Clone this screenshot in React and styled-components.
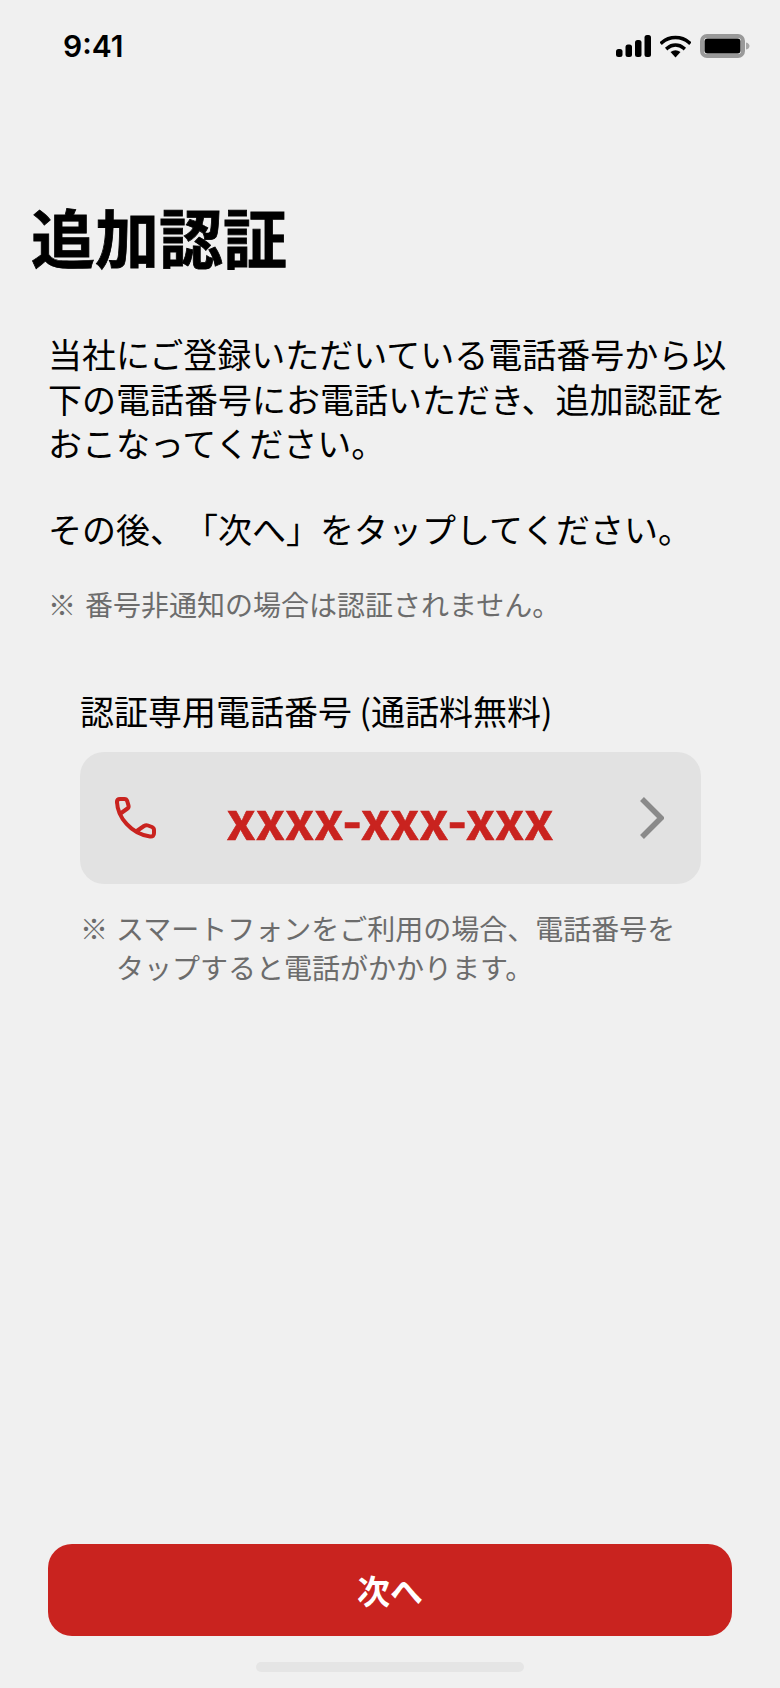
import React from 'react';
import styled, { createGlobalStyle } from 'styled-components';

const GlobalStyle = createGlobalStyle`
  html, body {
    margin: 0;
    padding: 0;
    background: #f0f0f0;
  }
  * {
    box-sizing: border-box;
  }
`;

const Screen = styled.div`
  width: 780px;
  height: 1688px;
  display: flex;
  flex-direction: column;
  background: #f0f0f0;
  color: #000;
  font-family: 'Noto Sans CJK JP', 'Noto Sans', sans-serif;
  text-spacing-trim: space-all;
  overflow: hidden;
`;

const StatusBar = styled.div`
  height: 92px;
  padding: 28px 30px 0 63px;
  display: flex;
  justify-content: space-between;
  align-items: flex-start;
`;

const Time = styled.span`
  font-family: Inter, sans-serif;
  font-weight: 600;
  font-size: 30px;
  line-height: 36px;
`;

const StatusIcons = styled.div`
  display: flex;
  align-items: center;
  gap: 9px;
  padding-top: 6px;
`;

const Title = styled.h1`
  margin: 101px 0 0 31px;
  font-size: 64px;
  line-height: 84px;
  font-weight: 700;
  -webkit-text-stroke: 0.8px #000;
`;

const Main = styled.main`
  flex: 1;
  padding: 55px 50px 0 48px;
`;

const Paragraph = styled.p`
  margin: 0 0 41px;
  font-size: 34px;
  line-height: 44.5px;
`;

const Notice = styled.p`
  margin: -8px 0 0;
  display: flex;
  gap: 9px;
  font-size: 28px;
  line-height: 40px;
  color: #6c6c6c;
`;

const PhoneSection = styled.section`
  margin: 63px 29px 0 32px;
`;

const PhoneLabel = styled.div`
  font-size: 34px;
  line-height: 48px;
  margin-bottom: 17px;
`;

const PhoneCard = styled.a`
  height: 132px;
  padding: 0 37px 0 34px;
  display: flex;
  align-items: center;
  justify-content: space-between;
  border-radius: 24px;
  background: #e2e2e2;
  text-decoration: none;
`;

const PhoneNumber = styled.span`
  font-weight: 700;
  font-size: 52px;
  line-height: 60px;
  color: #c9231f;
  margin-right: 16px;
  -webkit-text-stroke: 0.6px #c9231f;
`;

const Note = styled.div`
  margin-top: 25px;
  display: flex;
  gap: 8px;
  font-size: 28px;
  line-height: 39px;
  color: #6c6c6c;
`;

const NoteText = styled.div`
  flex: 1;
`;

const Footer = styled.footer`
  padding: 0 48px 16px;
  display: flex;
  flex-direction: column;
  align-items: center;
`;

const NextButton = styled.button`
  width: 100%;
  height: 92px;
  border: 0;
  border-radius: 24px;
  background: #c9231f;
  color: #fff;
  font-family: inherit;
  font-size: 33px;
  font-weight: 700;
`;

const HomeIndicator = styled.div`
  width: 268px;
  height: 10px;
  margin-top: 26px;
  border-radius: 5px;
  background: #e5e5e5;
`;

const SignalIcon = () => (
  <svg width="35" height="22" viewBox="0 0 35 22">
    <rect x="0" y="14" width="6.5" height="8" rx="2.5" />
    <rect x="9.5" y="9.5" width="6.5" height="12.5" rx="2.5" />
    <rect x="19" y="5" width="6.5" height="17" rx="2.5" />
    <rect x="28.5" y="0" width="6.5" height="22" rx="2.5" />
  </svg>
);

const WifiIcon = () => (
  <svg width="31" height="23" viewBox="0 0 31 23">
    <path d="M2 7.5C9.5 .8 21.5 .8 29 7.5" fill="none" stroke="#000" strokeWidth="3.6" strokeLinecap="square" />
    <path d="M7.5 13C12 9 19 9 23.5 13" fill="none" stroke="#000" strokeWidth="3.6" strokeLinecap="square" />
    <path d="M10.5 17Q15.5 13.3 20.5 17L15.5 22.5Z" />
  </svg>
);

const BatteryIcon = () => (
  <svg width="50" height="24" viewBox="0 0 50 24">
    <rect x="2" y="2" width="41" height="20" rx="5" fill="none" stroke="#999" strokeWidth="4" />
    <rect x="4.5" y="4.5" width="36" height="15" rx="3" />
    <path d="M46 8.5C48.5 9 49.5 10.5 49.5 12S48.5 15 46 15.5Z" fill="#a8a8a8" />
  </svg>
);

const PhoneIcon = () => (
  <svg width="42" height="42" viewBox="0 0 42 42" fill="none" stroke="#c9231f" strokeWidth="4" strokeLinejoin="round" strokeLinecap="round">
    <path d="M3 5C3.5 20 17 37 36 39.5C39 39.8 40 38.5 40 36V33Q40 31 38 30L34 28.5Q32 27.8 30 29L23.5 33.5" />
    <path d="M3 5Q3 2 6 2H10.5Q12.5 2 13.2 4L14.5 8.5Q15 10.5 13.5 11.5L6.5 16.5" />
  </svg>
);

const Chevron = () => (
  <svg width="24" height="42" viewBox="0 0 24 42" fill="none" stroke="#8a8a8a" strokeWidth="5.5">
    <path d="M2 2L21 21L2 40" />
  </svg>
);

export default function App() {
  return (
    <>
      <GlobalStyle />
      <Screen>
        <StatusBar>
          <Time>9:41</Time>
          <StatusIcons>
            <SignalIcon />
            <WifiIcon />
            <BatteryIcon />
          </StatusIcons>
        </StatusBar>
        <Title>追加認証</Title>
        <Main>
          <Paragraph>
            当社にご登録いただいている電話番号から以
            <br />
            下の電話番号にお電話いただき、追加認証を
            <br />
            おこなってください。
          </Paragraph>
          <Paragraph>その後、「次へ」をタップしてください。</Paragraph>
          <Notice>
            <span>※</span>
            <span>番号非通知の場合は認証されません。</span>
          </Notice>
          <PhoneSection>
            <PhoneLabel>認証専用電話番号 (通話料無料)</PhoneLabel>
            <PhoneCard href="#">
              <PhoneIcon />
              <PhoneNumber>xxxx-xxx-xxx</PhoneNumber>
              <Chevron />
            </PhoneCard>
            <Note>
              <span>※</span>
              <NoteText>
                スマートフォンをご利用の場合、電話番号を
                <br />
                タップすると電話がかかります。
              </NoteText>
            </Note>
          </PhoneSection>
        </Main>
        <Footer>
          <NextButton>次へ</NextButton>
          <HomeIndicator />
        </Footer>
      </Screen>
    </>
  );
}
